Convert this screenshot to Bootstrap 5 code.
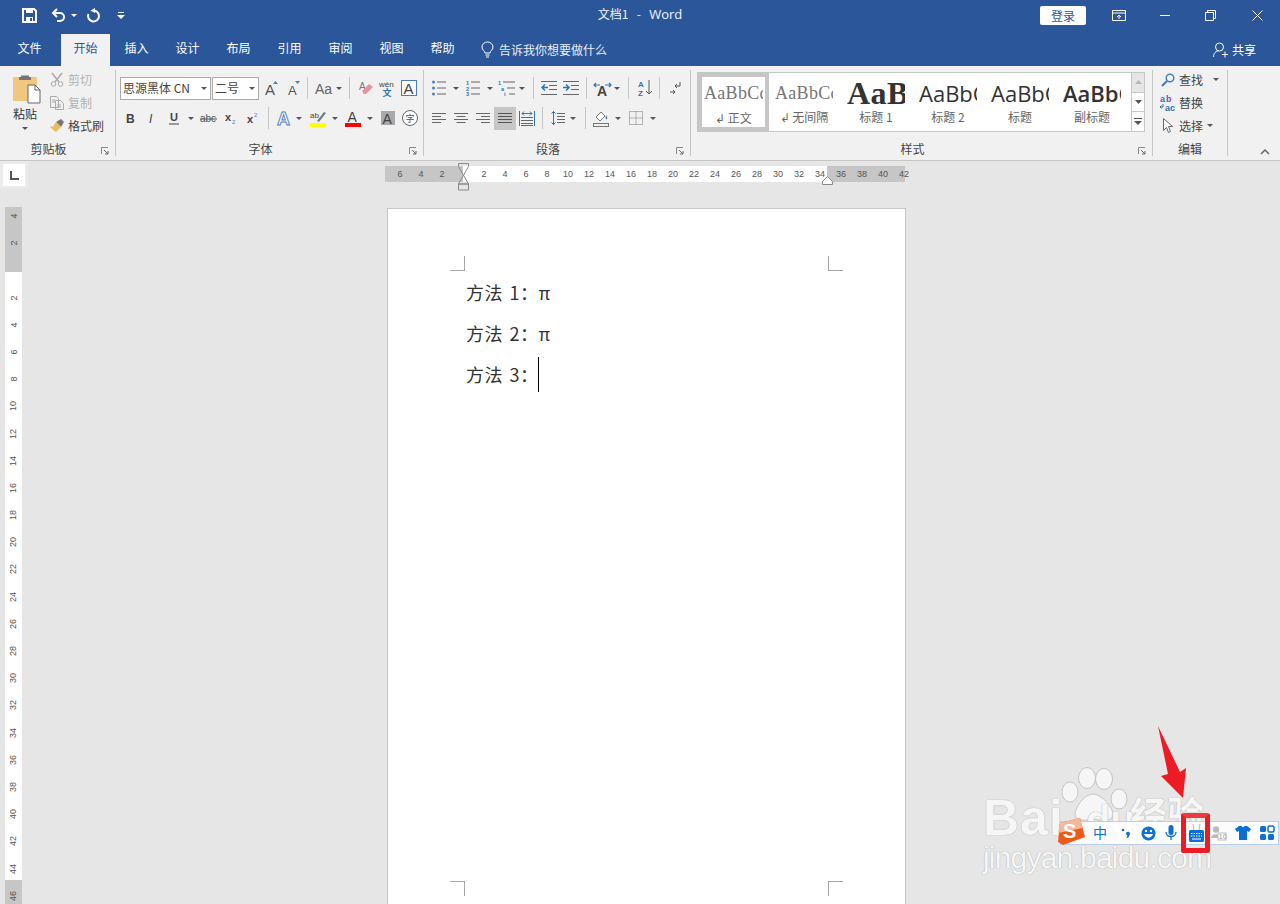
<!DOCTYPE html>
<html lang="zh-CN">
<head>
<meta charset="utf-8">
<title>文档1 - Word</title>
<link href="https://cdn.jsdelivr.net/npm/bootstrap@5.3.0/dist/css/bootstrap.min.css" rel="stylesheet">
<style>
html,body{margin:0;height:100%;overflow:hidden}
body{font-family:"Noto Sans CJK SC","Liberation Sans",sans-serif;font-size:12px;background:#e6e6e6;color:#444}
svg{display:block;flex:none;overflow:visible}
svg text{font-family:"Liberation Sans","Noto Sans CJK SC",sans-serif}
.wapp{height:904px;position:relative;overflow:hidden}
.wtitle{background:#2b579a;height:34px;padding-bottom:3px;display:grid;grid-template-columns:1fr auto 1fr;color:#fff;align-items:center}
.wqat{padding-left:22px;gap:0}
.wname{font-size:12px;white-space:pre;color:#f2f5fa;word-spacing:1.5px;padding-bottom:2px}
.wname b{font-weight:400;font-size:13px;font-family:"Open Sans",sans-serif}
.wlogin{background:#fff;color:#2b579a;border:0;border-radius:2px;width:46px;height:19px;line-height:19px;padding:0;font-size:12px;margin-right:26px;text-align:center}
.wtabs{background:#2b579a;height:32px;color:#fff;padding-left:5px;align-items:flex-end}
.wtab{width:49px;height:32px;line-height:28px;text-align:center;margin-right:2px;color:#fff}
.wtab.on{background:#f1f1f1;color:#2b579a}
.wtab.first{margin-right:7px;width:49px}
.wtell{color:#e9eef6;margin-left:12px;gap:5px;height:32px}
.wshare{margin-left:auto;margin-right:24px;gap:4px;height:32px}
.wribbon{background:#f1f1f1;height:95px;border-bottom:1px solid #c6c6c6;padding-top:4px;position:relative}
.wgrp{height:86px;border-right:1px solid #c6c6c6;flex:none;position:relative;display:flex;flex-direction:column}
.g1{width:116px}.g2{width:308px;padding:6px 0 0 4px}.g3{width:267px;padding:6px 0 0 8px}.g4{width:462px;padding:2px 0 0 6px}.g5{width:75px}
.wfoot{position:absolute;left:0;right:18px;bottom:0;height:14px;line-height:14px;text-align:center;color:#444}
.g5 .wfoot{right:0}
.wlaunch{position:absolute;right:6px;bottom:1px}
.wrow{display:flex;align-items:center;height:24px}
.wrow+.wrow{margin-top:6px}
.wsep{width:1px;height:22px;background:#c6c6c6;flex:none}
.wcar{width:0;height:0;border:3px solid transparent;border-top:3px solid #555;border-bottom:0;flex:none}
.wcombo{height:23px;background:#fff;border:1px solid #ababab;display:flex;align-items:center;padding:0 3px 0 2px;color:#444;flex:none;justify-content:space-between;white-space:nowrap}
.c1{width:91px}.c2{width:47px;margin-left:1px}
.wsmall{height:23px;display:flex;align-items:center;gap:4px;white-space:nowrap}
.wdis{color:#b1b1b1}
.wpaste{width:50px;padding:4px 0 0 13px;color:#333}
.wpaste span{display:block;width:24px;line-height:14px;margin-top:3px}
.wpaste .wcar{margin-top:6px}
.wclip{margin-top:-2px}
.wsel{width:22px;height:23px;background:#c6c6c6;display:flex;align-items:center;justify-content:center;flex:none;margin-left:4px}
.wgal{height:60px;display:flex;flex:none}
.witems{width:434px;height:60px;background:#fff;border:1px solid #c6c6c6;border-right:0;display:flex;overflow:hidden}
.wit{width:72px;flex:none;height:58px;overflow:hidden;text-align:center;padding:4px 8px 0 6px;color:#555}
.wit.act{border:4px solid #c6c6c6;padding:0 2px 0 2px;width:71px}
.wpv{height:31px;line-height:32px;overflow:hidden;white-space:nowrap;text-align:left;color:#333;font-family:"Liberation Sans",sans-serif}
.wpv.s0{font-family:"Liberation Serif",serif;font-size:18px;color:#777;letter-spacing:.3px}
.wpv.s1{font-family:"Liberation Serif",serif;font-size:32px;font-weight:700;color:#333;letter-spacing:.5px}
.wpv.s2{font-family:"Open Sans",sans-serif;font-size:22px;color:#333}
.wpv.s3{font-family:"Open Sans",sans-serif;font-size:22px;font-weight:600;color:#333}
.wlb{line-height:17px;white-space:nowrap;margin-top:0;color:#666}
.act .wlb{margin-top:1px}
.wscr{width:14px;flex:none;display:flex;flex-direction:column}
.wscr>div{flex:1;border:1px solid #c6c6c6;display:flex;align-items:center;justify-content:center;background:#fff}
.wscr>div+div{border-top:0}
.wscr>div:first-child{background:#e6e6e6}
.wedit{margin-top:-2px;padding:0 0 0 7px;color:#444}
.wedit .wsmall{gap:5px}
.wedit .tight{gap:3px}
.n1{margin-left:-1px}
.wcoll{position:absolute;left:1260px;top:83px}
.wtop{height:27px;display:flex}
.wselbox{width:28px;height:27px;background:#ebebeb;padding:3px 0 0 3px;flex:none}
.wselbox>div{width:22px;height:22px;background:#fff;display:flex;align-items:center;justify-content:center}
.whr{width:520px;height:16px;margin:5px 0 0 357px;position:relative;display:flex;background:linear-gradient(to right,#c6c6c6 78px,#fff 78px,#fff 442px,#c6c6c6 442px);padding-left:4.5px;font:9px/16px "Liberation Sans",sans-serif;color:#555;flex:none}
.whr span{width:21px;text-align:center;flex:none}
.wmk1{position:absolute;left:73px;top:-3px}
.wmk2{position:absolute;left:437px;top:10px}
.wbody{display:flex;height:697px;margin-top:19px}
.wvr{width:17px;margin-left:5px;height:697px;overflow:hidden;background:linear-gradient(to bottom,#c6c6c6 65px,#fff 65px,#fff 673px,#c6c6c6 673px);font:9px "Liberation Sans",sans-serif;color:#555;flex:none}
.wvr div{height:27.2px;display:flex;align-items:center;justify-content:center}
.wvr div:first-child{margin-top:-4.6px}
.wvr span{display:block;transform:rotate(-90deg);white-space:nowrap;line-height:10px}
.wpage{width:519px;margin:1px 0 0 365px;background:#fff;border:1px solid #c6c6c6;border-bottom:0;height:696px;display:flex;flex-direction:column;flex:none;padding:47px 62px 8px 62px}
.wcrops{display:flex;justify-content:space-between;flex:none}
.wcm{width:15px;height:15px;border:0 solid #a6a6a6}
.tl{border-right-width:1px;border-bottom-width:1px}.tr{border-left-width:1px;border-bottom-width:1px}
.bl{border-right-width:1px;border-top-width:1px}.br{border-left-width:1px;border-top-width:1px}
.wdoc{flex:1;padding:1px 0 0 16px;font-size:18px;color:#333;line-height:41px;letter-spacing:.5px;word-spacing:2px}
.wdoc p{margin:0;height:41px;white-space:pre;display:flex;align-items:center}
.wcur{width:1px;height:35px;background:#000;display:block;margin-left:-1px}
.wime{position:absolute;left:1060px;top:821px;width:219px;height:24px;background:rgba(255,255,255,.88);border:1px solid #b9d0e8;display:flex;align-items:center;padding-left:27px;color:#0a6fd6}
.wbig{position:absolute;left:1058px;top:818px}
.wmark{position:absolute;left:983px;top:767px;width:230px;height:110px;color:#f6f6f6;text-shadow:0 0 1px #b4b4b4,0 0 1px #b4b4b4;pointer-events:none}
.wm1{position:absolute;left:0;top:21px;font:700 50px/60px "Liberation Sans",sans-serif;letter-spacing:1px}
.wm2{position:absolute;left:103px;top:29px;font:700 40px/48px "Liberation Sans",sans-serif}
.wm3{position:absolute;left:147px;top:21px;font:700 37px/50px "Noto Sans CJK SC",sans-serif}
.wm4{position:absolute;left:0;top:73px;font:400 30px/36px "Liberation Sans",sans-serif;letter-spacing:-.8px;white-space:nowrap}
.wpaw{position:absolute;left:77px;top:0}
.wred{position:absolute;left:1181px;top:813px;width:29px;height:40px;border:5px solid #ed1c24;border-top-color:#ee3a42;border-radius:3px}
.warrow{position:absolute;left:1150px;top:720px}
.l1{margin-left:1px}.l2{margin-left:2px}.l3{margin-left:3px}.l4{margin-left:4px}.l5{margin-left:5px}.l6{margin-left:6px}.l7{margin-left:7px}.l8{margin-left:8px}.l9{margin-left:9px}.l10{margin-left:10px}.l12{margin-left:12px}.l13{margin-left:13px}.l14{margin-left:14px}.l16{margin-left:16px}.l20{margin-left:20px}.l36{margin-left:36px}.l34{margin-left:34px}.l37{margin-left:37px}
</style>
</head>
<body>
<div class="wapp">
  <div class="wtitle">
    <div class="d-flex align-items-center wqat">
      <svg width="15" height="15" viewBox="0 0 15 15"><path d="M1 1h11l2 2v11H1z" fill="none" stroke="#fff" stroke-width="2"/><rect x="4" y="1" width="7" height="4" fill="#fff"/><rect x="4" y="9" width="7" height="5" fill="#fff"/><rect x="8" y="10" width="2" height="3" fill="#2b579a"/></svg>
      <svg class="l14" width="15" height="15" viewBox="0 0 15 15"><path d="M2 5h7a4 4 0 0 1 0 8H6" fill="none" stroke="#fff" stroke-width="2"/><path d="M6 1 2 5l4 4" fill="none" stroke="#fff" stroke-width="2"/></svg>
      <span class="wcar l5" style="border-top-color:#fff"></span>
      <svg class="l9" width="15" height="15" viewBox="0 0 15 15"><path d="M7.500 2.500A5.500 5.500 0 1 1 2.400 6" fill="none" stroke="#fff" stroke-width="2"/><path d="M9 0 4.500 2.500 9 5z" fill="#fff"/></svg>
      <svg class="l16" width="8" height="8" viewBox="0 0 8 8"><rect x="1" y="0" width="6" height="1" fill="#fff"/><path d="M0 3h8L4 7z" fill="#fff"/></svg>
    </div>
    <div class="wname">文档1  -  <b>Word</b></div>
    <div class="d-flex align-items-center justify-content-end">
      <button class="wlogin" type="button">登录</button>
      <svg width="14" height="11" viewBox="0 0 14 11"><path d="M.5.5h13v10H.5zM.5 3h13" fill="none" stroke="#fff"/><path d="M7 9V5M5 7l2-2 2 2" fill="none" stroke="#fff"/></svg>
      <svg class="l34" width="11" height="11" viewBox="0 0 11 11"><path d="M0 5.500h10" stroke="#fff"/></svg>
      <svg class="l34" width="11" height="11" viewBox="0 0 11 11"><path d="M.5 2.500h8v8h-8zM2.500 2.500v-2h8v8h-2" fill="none" stroke="#fff"/></svg>
      <svg class="l36" width="11" height="11" viewBox="0 0 11 11" style="margin-right:17px"><path d="M.5.500l10 10M10.500.500l-10 10" stroke="#fff"/></svg>
    </div>
  </div>
  <div class="wtabs d-flex">
    <div class="wtab first">文件</div><div class="wtab on">开始</div><div class="wtab">插入</div><div class="wtab">设计</div><div class="wtab">布局</div><div class="wtab">引用</div><div class="wtab">审阅</div><div class="wtab">视图</div><div class="wtab">帮助</div>
    <div class="wtell d-flex align-items-center">
      <svg width="13" height="16" viewBox="0 0 13 16"><path d="M4 11c0-2-3-3-3-6a5.500 5 0 0 1 11 0c0 3-3 4-3 6z" fill="none" stroke="#fff"/><path d="M4.500 13h4M5 15h3" stroke="#fff"/></svg>
      <span>告诉我你想要做什么</span>
    </div>
    <div class="wshare d-flex align-items-center">
      <svg width="15" height="16" viewBox="0 0 15 16"><circle cx="6.500" cy="5" r="4" fill="none" stroke="#fff"/><path d="M.5 15c0-4 2.500-6 5-6M9 12.500h6M12 9.500v6" fill="none" stroke="#fff"/></svg>
      <span>共享</span>
    </div>
  </div>

  <div class="wribbon d-flex">
    <div class="wgrp g1">
      <div class="d-flex">
        <div class="wpaste">
          <svg width="28" height="30" viewBox="0 0 28 30"><rect x="0" y="3" width="24" height="24" rx="1" fill="#efc77e"/><path d="M8 3V1.500h8V3h2v3H6V3z" fill="#757575"/><path d="M15 11h7l5 5v13H15z" fill="#fff" stroke="#666"/><path d="M22 11v5h5" fill="none" stroke="#666"/></svg>
          <span>粘贴</span>
          <div class="wcar l9"></div>
        </div>
        <div class="wclip">
          <div class="wsmall wdis"><svg width="14" height="15" viewBox="0 0 14 15"><path d="M2 1l7 9M12 1l-7 9" stroke="#aaa" stroke-width="1.500"/><circle cx="3.500" cy="12" r="2.300" fill="none" stroke="#aaa"/><circle cx="10.500" cy="12" r="2.300" fill="none" stroke="#aaa"/></svg><span>剪切</span></div>
          <div class="wsmall wdis"><svg width="14" height="14" viewBox="0 0 14 14"><path d="M.5.500h6l2 2v9h-8zM5.500 4.500h5l3 3v6h-8z" fill="#f1f1f1" stroke="#aaa"/><path d="M2 4h3M2 6h3M7 9h4M7 11h4" stroke="#aaa"/></svg><span>复制</span></div>
          <div class="wsmall"><svg width="14" height="14" viewBox="0 0 14 14"><path d="M6 3l5-3 3 3-3 5z" fill="#777"/><path d="M6 3l5 5-5 5-6-5 2-1 1 1 1-2z" fill="#edb95e"/></svg><span>格式刷</span></div>
        </div>
      </div>
      <div class="wfoot">剪贴板</div>
      <svg class="wlaunch" width="8" height="8" viewBox="0 0 8 8"><path d="M.5 7V.5H7" fill="none" stroke="#888"/><path d="M3 3l4 4M7 4v3H4" fill="none" stroke="#666"/></svg>
    </div>
    <div class="wgrp g2">
      <div class="wrow">
        <div class="wcombo c1"><span>思源黑体 CN</span><span class="wcar"></span></div>
        <div class="wcombo c2"><span>二号</span><span class="wcar"></span></div>
        <svg class="l6" width="14" height="16" viewBox="0 0 14 16"><text x="0" y="15" font-size="15" fill="#555">A</text><path d="M8 4l2.500-3L13 4z" fill="#4a7ebb"/></svg>
        <svg class="l9" width="13" height="16" viewBox="0 0 13 16"><text x="0" y="15" font-size="13" fill="#555">A</text><path d="M7 1h5L9.500 4z" fill="#4a7ebb"/></svg>
        <span class="wsep l6"></span>
        <svg class="l7" width="18" height="14" viewBox="0 0 18 14"><text x="0" y="13" font-size="14" fill="#666">Aa</text></svg>
        <span class="wcar l3"></span>
        <span class="wsep l7"></span>
        <svg class="l9" width="15" height="16" viewBox="0 0 15 16"><text x="0" y="10" font-size="10" fill="#777">A</text><path d="M3 11l7-7 4 3-7 7H5z" fill="#e8939b"/></svg>
        <svg class="l5" width="16" height="18" viewBox="0 0 16 18"><text x="0" y="8" font-size="8" fill="#444">wén</text><text x="3.500" y="17" font-size="9" fill="#2e75b6" font-weight="700">文</text></svg>
        <svg class="l6" width="16" height="16" viewBox="0 0 16 16"><rect x=".5" y=".5" width="15" height="15" fill="#fff" stroke="#4a7ebb"/><text x="2.500" y="14" font-size="15" fill="#444">A</text></svg>
      </div>
      <div class="wrow">
        <svg class="l5" width="10" height="12" viewBox="0 0 10 12"><text x="1" y="11" font-size="12" font-weight="700" fill="#444">B</text></svg>
        <svg class="l12" width="10" height="12" viewBox="0 0 10 12"><text x="2" y="11" font-size="12" font-style="italic" fill="#444">I</text></svg>
        <svg class="l12" width="10" height="14" viewBox="0 0 10 14"><text x="1" y="10" font-size="11" font-weight="700" fill="#444">U</text><path d="M0 13h10" stroke="#444"/></svg>
        <span class="wcar l9"></span>
        <svg class="l6" width="17" height="12" viewBox="0 0 17 12"><text x="0" y="10" font-size="10" fill="#555">abc</text><path d="M0 7h17" stroke="#555"/></svg>
        <svg class="l8" width="12" height="12" viewBox="0 0 12 12"><text x="0" y="9" font-size="11" font-weight="700" fill="#444">x</text><text x="7" y="12" font-size="6" fill="#4a7ebb">2</text></svg>
        <svg class="l10" width="12" height="12" viewBox="0 0 12 12"><text x="0" y="11" font-size="11" font-weight="700" fill="#444">x</text><text x="7" y="5" font-size="6" fill="#4a7ebb">2</text></svg>
        <span class="wsep l9"></span>
        <svg class="l8" width="15" height="17" viewBox="0 0 15 17"><text x="0" y="15" font-size="18" fill="#fff" stroke="#4a7ebb" font-weight="700" stroke-width=".9">A</text></svg>
        <span class="wcar l4"></span>
        <svg class="l8" width="16" height="17" viewBox="0 0 16 17"><text x="0" y="8" font-size="8" fill="#444">ab</text><path d="M7 11l7-9 2 1-7 9z" fill="#777"/><rect y="13" width="16" height="4" fill="#ff0"/></svg>
        <span class="wcar l6"></span>
        <svg class="l7" width="16" height="17" viewBox="0 0 16 17"><text x="2.500" y="12" font-size="14" fill="#444">A</text><rect y="13" width="16" height="4" fill="#f00"/></svg>
        <span class="wcar l6"></span>
        <svg class="l8" width="14" height="14" viewBox="0 0 14 14"><rect width="14" height="14" fill="#aaa"/><text x="1.500" y="12.500" font-size="14" fill="#444">A</text></svg>
        <svg class="l7" width="16" height="16" viewBox="0 0 16 16"><circle cx="8" cy="8" r="7.500" fill="#fff" stroke="#666"/><text x="3.500" y="12" font-size="9" fill="#555">字</text></svg>
      </div>
      <div class="wfoot">字体</div>
      <svg class="wlaunch" width="8" height="8" viewBox="0 0 8 8"><path d="M.5 7V.5H7" fill="none" stroke="#888"/><path d="M3 3l4 4M7 4v3H4" fill="none" stroke="#666"/></svg>
    </div>
    <div class="wgrp g3">
      <div class="wrow">
        <svg width="14" height="16" viewBox="0 0 14 16"><g fill="#4a7ebb"><circle cx="1.500" cy="2" r="1.500"/><circle cx="1.500" cy="8" r="1.500"/><circle cx="1.500" cy="14" r="1.500"/></g><path d="M5 2h9M5 8h9M5 14h9" stroke="#666"/></svg>
        <span class="wcar l7"></span>
        <svg class="l7" width="14" height="16" viewBox="0 0 14 16"><g font-size="5.500" fill="#2e75b6" font-weight="700"><text x="0" y="5">1</text><text x="0" y="11">2</text><text x="0" y="16">3</text></g><path d="M5 2h9M5 8h9M5 14h9" stroke="#666"/></svg>
        <span class="wcar l7"></span>
        <svg class="l5" width="17" height="16" viewBox="0 0 17 16"><g font-size="5.500" fill="#2e75b6" font-weight="700"><text x="0" y="5">1</text><text x="3" y="11">a</text><text x="6" y="16">i</text></g><path d="M5 2h12M9 8h8M11 14h6" stroke="#666"/></svg>
        <span class="wcar l4"></span>
        <span class="wsep l8"></span>
        <svg class="l7" width="16" height="14" viewBox="0 0 16 14"><path d="M0 .5h16M8 4.500h8M8 8.500h8M0 13.500h16" stroke="#666"/><path d="M7 6.500H1M4 3.500l-3 3 3 3" fill="none" stroke="#2e75b6" stroke-width="1.500"/></svg>
        <svg class="l6" width="16" height="14" viewBox="0 0 16 14"><path d="M0 .5h16M8 4.500h8M8 8.500h8M0 13.500h16" stroke="#666"/><path d="M0 6.500h6M3 3.500l3 3-3 3" fill="none" stroke="#2e75b6" stroke-width="1.500"/></svg>
        <span class="wsep l7"></span>
        <svg class="l7" width="17" height="15" viewBox="0 0 17 15"><text x="3" y="15" font-size="14" fill="#444" font-weight="700">A</text><path d="M0 4h6M2 2 0 4l2 2M11 4h6M15 2l2 2-2 2" fill="none" stroke="#2e75b6" stroke-width="1.200"/></svg>
        <span class="wcar l3"></span>
        <span class="wsep l8"></span>
        <svg class="l9" width="14" height="16" viewBox="0 0 14 16"><text x="0" y="7" font-size="8" font-weight="700" fill="#2e75b6">A</text><text x="0" y="16" font-size="8" font-weight="700" fill="#7d4fb0">Z</text><path d="M11 0v14M8 11l3 3 3-3" fill="none" stroke="#555"/></svg>
        <span class="wsep l7"></span>
        <svg class="l10" width="11" height="13" viewBox="0 0 11 13"><path d="M10 0v4H5M7 2 5 4l2 2M0 10h5M3 8l2 2-2 2" fill="none" stroke="#555"/></svg>
      </div>
      <div class="wrow">
        <svg width="14" height="11" viewBox="0 0 14 11"><path d="M0 .5h14M0 3.500h9M0 6.500h14M0 9.500h9" stroke="#666"/></svg>
        <svg class="l8" width="14" height="11" viewBox="0 0 14 11"><path d="M0 .5h14M2.500 3.500h9M0 6.500h14M2.500 9.500h9" stroke="#666"/></svg>
        <svg class="l8" width="14" height="11" viewBox="0 0 14 11"><path d="M0 .5h14M5 3.500h9M0 6.500h14M5 9.500h9" stroke="#666"/></svg>
        <div class="wsel"><svg width="14" height="11" viewBox="0 0 14 11"><path d="M0 .5h14M0 3.500h14M0 6.500h14M0 9.500h14" stroke="#555"/></svg></div>
        <svg class="l3" width="16" height="15" viewBox="0 0 16 15"><path d="M.5 0v15M15.500 0v15" stroke="#2e75b6"/><path d="M3 2.500h10M5 .5l-2 2 2 2M11 .5l2 2-2 2" fill="none" stroke="#2e75b6"/><path d="M2 6.500h12M2 9.500h12M2 12.500h12M2 14.500h12" stroke="#666"/></svg>
        <span class="wsep l7"></span>
        <svg class="l8" width="14" height="16" viewBox="0 0 14 16"><path d="M2.500 1v14M.5 3.500l2-2 2 2M.5 12.500l2 2 2-2" fill="none" stroke="#2e75b6"/><path d="M6 3.500h8M6 6.500h8M6 9.500h8M6 12.500h8" stroke="#666"/></svg>
        <span class="wcar l5"></span>
        <span class="wsep l9"></span>
        <svg class="l7" width="16" height="17" viewBox="0 0 16 17"><path d="M3 7l5-5 4 4-5 5z" fill="#fff" stroke="#777"/><path d="M13 5c1 2 2 3 1 4s-2-1-1-4z" fill="#4a7ebb"/><rect x=".5" y="13.500" width="15" height="3" fill="#f1f1f1" stroke="#777"/></svg>
        <span class="wcar l6"></span>
        <svg class="l8" width="14" height="14" viewBox="0 0 14 14"><path d="M.5.5h13v13H.5zM7 .5v13M.5 7h13" fill="none" stroke="#777" stroke-dasharray="1 1"/></svg>
        <span class="wcar l7"></span>
      </div>
      <div class="wfoot">段落</div>
      <svg class="wlaunch" width="8" height="8" viewBox="0 0 8 8"><path d="M.5 7V.5H7" fill="none" stroke="#888"/><path d="M3 3l4 4M7 4v3H4" fill="none" stroke="#666"/></svg>
    </div>
    <div class="wgrp g4">
      <div class="wgal">
        <div class="witems">
          <div class="wit act"><div class="wpv s0">AaBbCc</div><div class="wlb">↲ 正文</div></div>
          <div class="wit"><div class="wpv s0">AaBbCc</div><div class="wlb">↲ 无间隔</div></div>
          <div class="wit"><div class="wpv s1">AaB</div><div class="wlb">标题 1</div></div>
          <div class="wit"><div class="wpv s2">AaBbC</div><div class="wlb">标题 2</div></div>
          <div class="wit"><div class="wpv s2">AaBbC</div><div class="wlb">标题</div></div>
          <div class="wit"><div class="wpv s3">AaBbC</div><div class="wlb">副标题</div></div>
        </div>
        <div class="wscr">
          <div><svg width="7" height="4" viewBox="0 0 7 4"><path d="M0 4l3.500-4L7 4z" fill="#b5b5b5"/></svg></div>
          <div><svg width="7" height="4" viewBox="0 0 7 4"><path d="M0 0l3.500 4L7 0z" fill="#555"/></svg></div>
          <div><svg width="8" height="8" viewBox="0 0 8 8"><path d="M0 .5h8" stroke="#555"/><path d="M0 3l4 4 4-4z" fill="#555"/></svg></div>
        </div>
      </div>
      <div class="wfoot">样式</div>
      <svg class="wlaunch" width="8" height="8" viewBox="0 0 8 8"><path d="M.5 7V.5H7" fill="none" stroke="#888"/><path d="M3 3l4 4 4-4" fill="none" stroke="none"/><path d="M3 3l4 4M7 4v3H4" fill="none" stroke="#666"/></svg>
    </div>
    <div class="wgrp g5">
      <div class="wedit">
        <div class="wsmall"><svg class="l1" width="14" height="14" viewBox="0 0 14 14"><circle cx="9" cy="5" r="3.800" fill="none" stroke="#4a7ebb" stroke-width="1.500"/><path d="M6 8l-5 5" stroke="#4a7ebb" stroke-width="2.200"/></svg><span class="n1">查找</span><span class="wcar l5"></span></div>
        <div class="wsmall tight"><svg width="16" height="16" viewBox="0 0 16 16"><text x="0" y="7" font-size="9" font-weight="700" fill="#2e75b6">a</text><text x="6" y="7" font-size="9" font-weight="700" fill="#7d4fb0">b</text><text x="5" y="16" font-size="9" font-weight="700" fill="#2e75b6">ac</text><path d="M3 9v3H0M1.500 10.500 0 12l1.500 1.500" fill="none" stroke="#2e75b6"/></svg><span>替换</span></div>
        <div class="wsmall tight"><svg class="l3" width="10" height="15" viewBox="0 0 10 15"><path d="M.5.500v12l3-3 2 5 2-1-2-5h4z" fill="#fff" stroke="#666"/></svg><span class="l3">选择</span><span class="wcar l1"></span></div>
      </div>
      <div class="wfoot">编辑</div>
    </div>
    <svg class="wcoll" width="10" height="6" viewBox="0 0 10 6"><path d="M1 5l4-4 4 4" fill="none" stroke="#666" stroke-width="1.500"/></svg>
  </div>

  <div class="wtop">
    <div class="wselbox"><div><svg width="9" height="9" viewBox="0 0 9 9"><path d="M1 0v8h8" fill="none" stroke="#555" stroke-width="2"/></svg></div></div>
    <div class="whr">
      <span>6</span><span>4</span><span>2</span><span></span><span>2</span><span>4</span><span>6</span><span>8</span><span>10</span><span>12</span><span>14</span><span>16</span><span>18</span><span>20</span><span>22</span><span>24</span><span>26</span><span>28</span><span>30</span><span>32</span><span>34</span><span>36</span><span>38</span><span>40</span><span>42</span>
      <svg class="wmk1" width="11" height="28" viewBox="0 0 11 28"><path d="M.5.500h10v3L.5 21h10L.5 3.500zM.5 21h10v6H.5z" fill="none" stroke="#888"/></svg>
      <svg class="wmk2" width="11" height="9" viewBox="0 0 11 9"><path d="M5.500.5l5 5v3H.5v-3z" fill="#fff" stroke="#888"/></svg>
    </div>
  </div>
  <div class="wbody">
    <div class="wvr">
      <div><span>4</span></div><div><span>2</span></div><div></div><div><span>2</span></div><div><span>4</span></div><div><span>6</span></div><div><span>8</span></div><div><span>10</span></div><div><span>12</span></div><div><span>14</span></div><div><span>16</span></div><div><span>18</span></div><div><span>20</span></div><div><span>22</span></div><div><span>24</span></div><div><span>26</span></div><div><span>28</span></div><div><span>30</span></div><div><span>32</span></div><div><span>34</span></div><div><span>36</span></div><div><span>38</span></div><div><span>40</span></div><div><span>42</span></div><div><span>44</span></div><div><span>46</span></div>
    </div>
    <div class="wpage">
      <div class="wcrops"><div class="wcm tl"></div><div class="wcm tr"></div></div>
      <div class="wdoc">
        <p>方法 1：π</p>
        <p>方法 2：π</p>
        <p>方法 3：<span class="wcur"></span></p>
      </div>
      <div class="wcrops"><div class="wcm bl"></div><div class="wcm br"></div></div>
    </div>
  </div>

  <div class="wmark">
    <svg class="wpaw" width="70" height="54" viewBox="0 0 70 54"><g fill="#f6f6f6" stroke="#c4c4c4"><ellipse cx="10" cy="25" rx="8" ry="10"/><ellipse cx="27" cy="11" rx="8.500" ry="10.500"/><ellipse cx="44" cy="12" rx="8.500" ry="10.500"/><ellipse cx="59" cy="32" rx="8" ry="10"/><path d="M33 27c9 0 20 14 20 20 0 8-10 7-20 5-10 2-18 2-18-5 0-6 9-20 18-20z"/></g></svg>
    <div class="wm1">Bai</div>
    <div class="wm2">du</div>
    <div class="wm3">经验</div>
    <div class="wm4">jingyan.baidu.com</div>
  </div>
  <div class="wime">
    <svg class="l4" width="16" height="16" viewBox="0 0 16 16"><text x="1" y="13" font-size="14" fill="#0a6fd6">中</text></svg>
    <svg class="l13" width="10" height="14" viewBox="0 0 10 14"><circle cx="2" cy="4" r="1.300" fill="#0a6fd6"/><path d="M5 8a2 2 0 1 1 3.500 1c0 1.500-1.500 3-3.500 3.500 1-1 1.500-2 1.300-3z" fill="#0a6fd6"/></svg>
    <svg class="l10" width="15" height="15" viewBox="0 0 15 15"><circle cx="7.500" cy="7.500" r="7" fill="#0a6fd6"/><path d="M3 8c2 5 7 5 9 0z" fill="#fff"/><circle cx="5" cy="5" r="1.200" fill="#fff"/><circle cx="10" cy="5" r="1.200" fill="#fff"/></svg>
    <svg class="l9" width="12" height="16" viewBox="0 0 12 16"><rect x="3.500" y="0" width="5" height="10" rx="2.500" fill="#0a6fd6"/><path d="M1 7c0 6 10 6 10 0M6 12v3" fill="none" stroke="#0a6fd6" stroke-width="1.300"/></svg>
    <svg class="l12" width="15" height="18" viewBox="0 0 15 18"><path d="M4 0l1 6M11 0l-1 6" stroke="#b8b8b8"/><rect x="0" y="6" width="15" height="12" rx="1.500" fill="#0a6fd6"/><path d="M2 9.500h11M2 12h11" stroke="#fff" stroke-dasharray="1.500 1"/><path d="M3 15h9" stroke="#fff"/></svg>
    <svg class="l7" width="15" height="14" viewBox="0 0 15 14"><circle cx="5" cy="3.500" r="3.200" fill="#bbb"/><path d="M0 12c0-5 10-5 10 0z" fill="#bbb"/><rect x="7" y="7" width="8" height="7" fill="#fff" stroke="#bbb"/><text x="7.800" y="13" font-size="7" fill="#999">10</text></svg>
    <svg class="l9" width="16" height="14" viewBox="0 0 16 14"><path d="M4 0h2.500c.5 1.500 2.500 1.500 3 0H12l4 3-2 3-2-1v9H4V5L2 6 0 3z" fill="#0a6fd6"/></svg>
    <svg class="l9" width="14" height="14" viewBox="0 0 14 14"><rect width="6" height="6" rx="1.500" fill="#0a6fd6"/><rect x="8" width="6" height="6" rx="1.500" fill="none" stroke="#0a6fd6" stroke-width="1.500"/><rect y="8" width="6" height="6" rx="1.500" fill="#0a6fd6"/><rect x="8" y="8" width="6" height="6" rx="1.500" fill="#0a6fd6"/></svg>
  </div>
  <svg class="wbig" width="28" height="28" viewBox="0 0 28 28"><path d="M2 5 22 0l5 19-22 8-5-3z" fill="#ef5a14"/><path d="M2 5 22 0l2.500 10L0 15z" fill="#f6b79a"/><text x="5" y="20" font-size="20" font-weight="700" fill="#fff">S</text></svg>
  <div class="wred"></div>
  <svg class="warrow" width="40" height="80" viewBox="0 0 40 80"><path d="M8 6 30 52l6-4-3 30-22-22 7-2z" fill="#ed1c24"/></svg>
</div>
<script src="https://cdn.jsdelivr.net/npm/bootstrap@5.3.0/dist/js/bootstrap.bundle.min.js"></script>
</body>
</html>
